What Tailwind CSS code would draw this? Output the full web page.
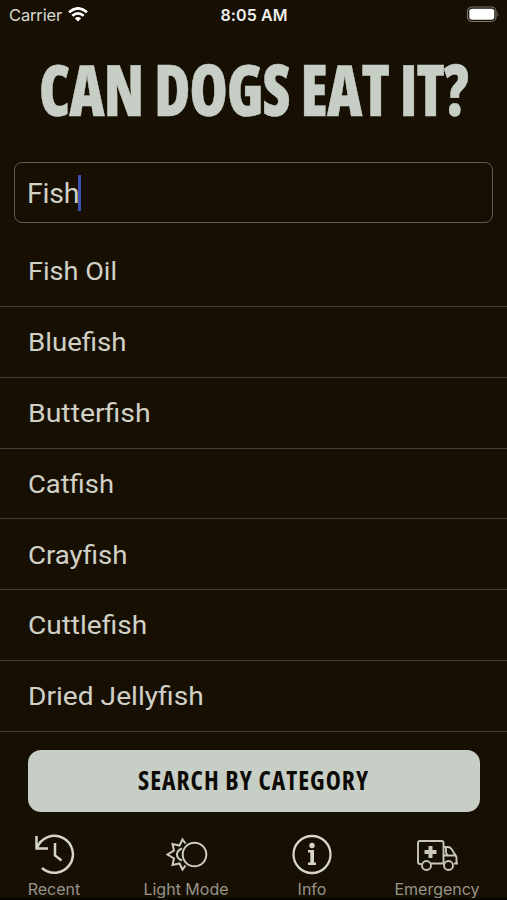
<!DOCTYPE html>
<html lang="en"><head><meta charset="utf-8"><title>Can Dogs Eat It?</title>
<script src="https://cdn.jsdelivr.net/npm/@tailwindcss/browser@4"></script></head>
<body class="bg-[#171003]">
<div class="w-[507px] h-[900px] flex flex-col overflow-hidden bg-[#171002] text-[#d0d0c7] font-['Roboto',sans-serif] border-b-2 border-[#080400]">
<header class="h-[30px] shrink-0 grid grid-cols-3 items-center pl-[9px] pr-[8px] text-[16.5px] font-['Inter',sans-serif]">
<div class="flex items-center gap-[6px] text-[#d8d8d2] tracking-[-0.15px]"><span>Carrier</span>
<svg class="w-[20px] h-[15px] -mt-[2px]" viewBox="0 0 20 15" fill="none" stroke="#fff" stroke-width="2.6"><path d="M1 5.2Q10-2.6 19 5.2M4.3 8.8Q10 3.8 15.7 8.8"/><path d="M6.9 11.4Q10 8.6 13.1 11.4L10 14.6Z" fill="#fff" stroke="none"/></svg></div>
<div class="text-center font-semibold text-[16px] text-[#eeeeea] tracking-[0.1px]">8:05 AM</div>
<svg class="w-[33px] h-[17px] justify-self-end -mt-[2px]" viewBox="0 0 33 17"><rect x="1.500" y="1" width="28.5" height="14.5" rx="4.5" fill="none" stroke="#77736d" stroke-width="1.2"/><rect x="3.300" y="2.8" width="25" height="11" rx="2.8" fill="#fff"/><path d="M31.500 6q1.6 2.2 0 4.5z" fill="#77736d"/></svg>
</header>
<h1 class="h-[132px] shrink-0"><svg class="w-full h-full" viewBox="0 30 507 132" fill="#c6cec6" stroke="#c6cec6" stroke-width="0.5" font-family="Open Sans" font-weight="800" font-size="71.5" style="font-stretch:75%;word-spacing:1px;letter-spacing:-1px"><text x="39" y="116" textLength="429" lengthAdjust="spacingAndGlyphs">CAN DOGS EAT IT?</text></svg></h1>
<div class="mx-[14px] h-[61px] shrink-0 rounded-[8px] border border-[#645a50] flex items-center pl-[12px] text-[28.5px] tracking-[-0.2px]"><span class="pt-[3px]">Fish</span><span class="w-[3px] h-[36px] bg-[#3c52b0] -ml-px"></span></div>
<ul class="h-[509px] shrink-0 grid grid-rows-7 pt-[13px] text-[26.3px]">
<li class="flex items-center pt-[2px] pl-[28px] border-b border-[#473e36]"><span class="origin-left scale-x-[1.03]">Fish Oil</span></li>
<li class="flex items-center pt-[2px] pl-[28px] border-b border-[#473e36]"><span class="origin-left scale-x-[1.05]">Bluefish</span></li>
<li class="flex items-center pt-[2px] pl-[28px] border-b border-[#473e36]"><span class="origin-left scale-x-[1.08]">Butterfish</span></li>
<li class="flex items-center pt-[2px] pl-[28px] border-b border-[#473e36]"><span class="origin-left scale-x-[1.04]">Catfish</span></li>
<li class="flex items-center pt-[2px] pl-[28px] border-b border-[#473e36]"><span class="origin-left scale-x-[1.05]">Crayfish</span></li>
<li class="flex items-center pt-[2px] pl-[28px] border-b border-[#473e36]"><span class="origin-left scale-x-[1.065]">Cuttlefish</span></li>
<li class="flex items-center pt-[2px] pl-[28px] border-b border-[#473e36]"><span class="origin-left scale-x-[1.07]">Dried Jellyfish</span></li>
</ul>
<button class="mt-[18px] ml-[28px] w-[452px] h-[62px] shrink-0 rounded-[13px] bg-[#c6cec6]"><svg class="w-full h-full" viewBox="28 750 452 62" fill="#0d0a05" font-family="Open Sans" font-weight="700" font-size="27.3" style="font-stretch:75%;letter-spacing:1.1px"><text x="138" y="789.5" textLength="231" lengthAdjust="spacingAndGlyphs">SEARCH BY CATEGORY</text></svg></button>
<nav class="h-[86px] shrink-0 flex justify-between pt-[20px] pl-[26px] pr-[26px] font-['Inter',sans-serif] text-[16px] text-[#96938a]">
<a class="w-[56px] flex flex-col items-center"><svg class="w-[44px] h-[44px] shrink-0" viewBox="32 832 44 44" fill="none" stroke="#d4d4c8" stroke-width="2.5"><path d="M37 848A18.5 18.5 0 1 1 42 868M36.500 836V848.500H48M55 843V855.500L61.500 860.500"/></svg><span class="leading-[26px]">Recent</span></a>
<a class="w-[90px] flex flex-col items-center"><svg class="w-[44px] h-[44px] shrink-0" viewBox="164 832 44 44" fill="none" stroke="#ccccc0" stroke-width="2"><circle cx="194.500" cy="854.500" r="11.800"/><path d="M185.500 843.500L182.500 839.500L179.500 845.500L172.500 844L174 850.500L167.500 854.500L174 858.500L172.500 865L179.500 863.500L182.500 869.500L185.500 865.500M182 848.500Q177 850.500 177 854.500T182 860.500"/></svg><span class="leading-[26px] whitespace-nowrap">Light Mode</span></a>
<a class="w-[44px] flex flex-col items-center"><svg class="w-[44px] h-[44px] shrink-0" viewBox="290 832 44 44"><circle cx="312" cy="854.500" r="18.500" fill="none" stroke="#d4d4c8" stroke-width="2.3"/><circle cx="312" cy="845.500" r="2.700" fill="#d4d4c8"/><path d="M308 850H314V862.500H316V865H308V862.500H310.300V852.500H308Z" fill="#d4d4c8"/></svg><span class="leading-[26px]">Info</span></a>
<a class="w-[88px] flex flex-col items-center"><svg class="w-[44px] h-[44px] shrink-0" viewBox="415 832 44 44" fill="none" stroke="#c8c8bc" stroke-width="1.900"><path d="M421.500 864H420Q418 864 418 862V843Q418 841 420 841H441.500Q443.500 841 443.500 843V863.500M431 863.500H443.500M443.500 847H448Q450 847 451.500 849L455 854.500Q456.500 856 456.500 858V863.500H454M443.500 855.500H455M446 847V853L448 855.500M455 863.500H458"/><circle cx="426.500" cy="865.500" r="4.500"/><circle cx="448.500" cy="865.500" r="4.500"/><path d="M430.500 846V858M424.500 852H436.500" stroke-width="4"/></svg><span class="leading-[26px]">Emergency</span></a>
</nav>
</div></body></html>
